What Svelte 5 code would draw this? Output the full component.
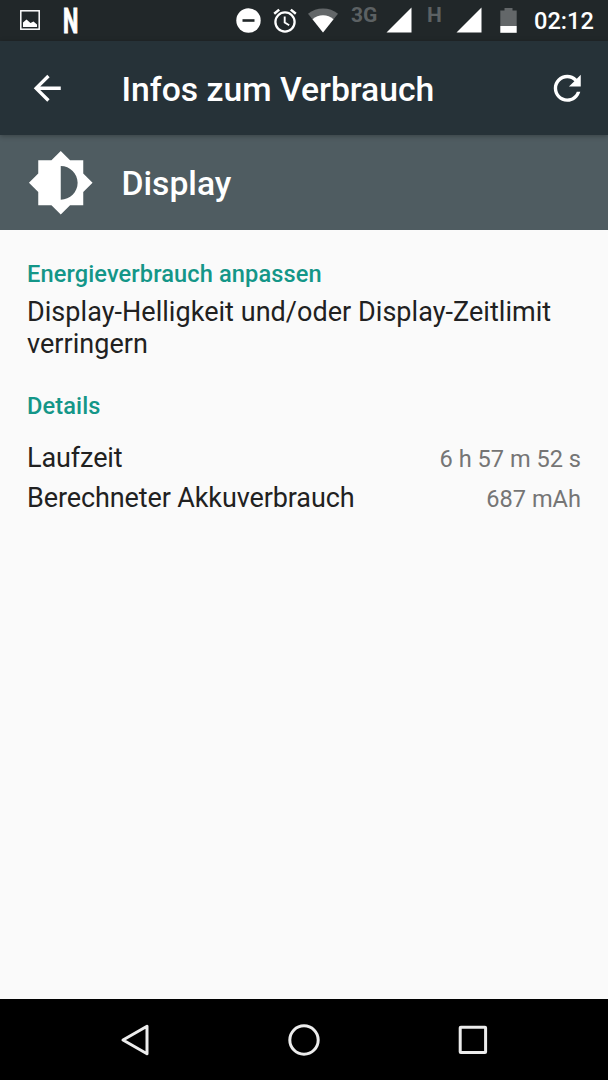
<!-- script -->
<script lang="ts">
  /* types */
  type Detail = { label: string, value: string }

  /* constants */
  const title = 'Infos zum Verbrauch'
  const details: Detail[] = [
    { label: 'Laufzeit', value: '6 h 57 m 52 s' },
    { label: 'Berechneter Akkuverbrauch', value: '687 mAh' }
  ]
</script>

<!-- template -->
<div class="screen">
  <div class="status-bar">
    <svg class="picture" width="20" height="20" viewBox="0 0 20 20">
      <rect x="0.8" y="0.8" width="18.4" height="18.4" fill="none" stroke="#fff" stroke-width="1.5" />
      <path d="M3 17v-4.500l3.500-3 4 3.500 3-1.500 3.500 3v2.500z" fill="#fff" />
    </svg>
    <span class="netflix">N</span>

    <div class="status-icons">
      <svg class="dnd" width="25" height="25" viewBox="0 0 25 25">
        <circle cx="12.500" cy="12.500" r="12.200" fill="#fff" />
        <rect x="6.500" y="11.200" width="12" height="2.600" fill="#212729" />
      </svg>
      <svg class="alarm" width="24" height="25" viewBox="0 0 24 25" fill="none" stroke="#fff">
        <circle cx="12" cy="14" r="9.600" stroke-width="2.300" />
        <path d="M11.700 8.500v6l4.500 2.700" stroke-width="1.900" />
        <path d="M1.200 5.800l5-4.200M22.800 5.800l-5-4.200" stroke-width="2.500" />
      </svg>
      <svg class="wifi" width="30" height="25" viewBox="0 0 30 25">
        <path d="M15 24.500L0 5.700Q6.500 0.500 15 0.500T30 5.700z" fill="#636769" />
        <path d="M15 24.500L4.500 11.200Q9 7.200 15 7.200T25.500 11.200z" fill="#fff" />
      </svg>
      <span class="network three-g">3G</span>
      <svg class="signal" width="26" height="26" viewBox="0 0 26 26">
        <path d="M25.500 0.500v25H0.500z" fill="#fff" />
      </svg>
      <span class="network h">H</span>
      <svg class="signal" width="26" height="26" viewBox="0 0 26 26">
        <path d="M25.500 0.500v25H0.500z" fill="#fff" />
      </svg>
      <svg class="battery" width="17" height="25" viewBox="0 0 17 25">
        <path d="M0.300 2.500h4.200V0h8v2.500h4.200V18H0.300z" fill="#636769" />
        <path d="M0.300 18h16.400v6.800H0.300z" fill="#fff" />
      </svg>
    </div>
    <span class="clock">02:12</span>
  </div>

  <header class="toolbar">
    <svg class="action" viewBox="0 0 24 24">
      <path d="M20 11H7.830l5.590-5.590L12 4l-8 8 8 8 1.410-1.410L7.830 13H20v-2z" />
    </svg>
    <h1>{title}</h1>
    <svg class="action" viewBox="0 0 24 24">
      <path d="M17.650 6.350C16.200 4.900 14.210 4 12 4c-4.420 0-7.990 3.580-7.990 8s3.570 8 7.990 8c3.730 0 6.840-2.550 7.730-6h-2.080c-.82 2.330-3.040 4-5.650 4-3.310 0-6-2.690-6-6s2.690-6 6-6c1.660 0 3.140.69 4.220 1.780L13 11h7V4l-2.350 2.350z" />
    </svg>
  </header>

  <div class="entry">
    <svg class="brightness" viewBox="0 0 24 24">
      <path d="M20 15.310L23.310 12 20 8.690V4h-4.690L12 .69 8.690 4H4v4.690L.69 12 4 15.310V20h4.690L12 23.310 15.310 20H20v-4.690zM12 18V6c3.310 0 6 2.690 6 6s-2.690 6-6 6z" />
    </svg>
    <h2>Display</h2>
  </div>

  <main>
    <h3>Energieverbrauch anpassen</h3>
    <p>Display-Helligkeit und/oder Display-Zeitlimit verringern</p>
    <h3 class="details-title">Details</h3>
    {#each details as detail}
      <div class="detail">
        <span class="label">{detail.label}</span>
        <span class="value">{detail.value}</span>
      </div>
    {/each}
  </main>

  <nav>
    <svg width="34" height="34" viewBox="0 0 34 34">
      <path d="M29 3.200v27.600L5 17z" />
    </svg>
    <svg width="34" height="34" viewBox="0 0 34 34">
      <circle cx="17" cy="17" r="14.200" />
    </svg>
    <svg width="34" height="34" viewBox="0 0 34 34">
      <rect x="4.200" y="4.200" width="25.400" height="25.400" rx="0.600" />
    </svg>
  </nav>
</div>

<!-- styles -->
<style>
  :global(body) {
    margin: 0;
    background-color: #fafafa;
  }

  /* containers */
  .screen {
    display: flex;
    flex-direction: column;
    width: 608px;
    height: 1080px;
    overflow: hidden;
    background-color: #fafafa;
    color: #212121;
    font-family: Roboto, sans-serif;
  }
  svg {
    display: block;
    flex: none;
  }
  h1, h2, h3, p {
    margin: 0;
    font-weight: 500;
  }

  /* status bar */
  .status-bar {
    display: flex;
    align-items: center;
    flex: none;
    height: 41px;
    padding: 0 14px 0 20px;
    box-sizing: border-box;
    background-color: #212729;
    color: #fff;
  }
  .picture {
    margin-bottom: 1px;
  }
  .netflix {
    width: 14px;
    margin-left: 23px;
    padding-top: 2px;
    font-size: 35px;
    line-height: 39px;
    font-weight: 700;
    -webkit-text-stroke: 1px #fff;
    transform: scaleX(0.62);
    transform-origin: left;
  }
  .status-icons {
    display: flex;
    align-items: center;
    height: 40px;
    margin-bottom: 1px;
    margin-left: auto;
  }
  .alarm {
    margin-left: 12px;
  }
  .wifi {
    margin-left: 11px;
  }
  .network {
    align-self: flex-start;
    margin-top: -3px;
    color: #5c6163;
    font-size: 21px;
    line-height: 20px;
    font-weight: 700;
  }
  .three-g {
    width: 26px;
    margin-left: 13px;
  }
  .h {
    width: 15px;
    margin-left: 15px;
  }
  .signal {
    margin-left: 9px;
  }
  .h + .signal {
    margin-left: 14px;
  }
  .battery {
    margin-left: 18px;
  }
  .clock {
    width: 60px;
    margin-left: 17px;
    padding-top: 2px;
    font-size: 23.600px;
    line-height: 39px;
    font-weight: 500;
  }
  .network {
    margin-top: 5px;
  }

  /* toolbar */
  .toolbar {
    position: relative;
    display: flex;
    align-items: center;
    flex: none;
    height: 94px;
    padding: 0 21px 0 27px;
    background-color: #263238;
    box-shadow: 0 1px 5px rgba(0, 0, 0, 0.3);
    color: #fff;
  }
  .action {
    width: 40.500px;
    height: 40.500px;
    fill: #fff;
  }
  h1, h2 {
    padding-top: 3px;
    font-size: 33.700px;
    line-height: 40px;
  }
  h1 {
    flex: 1;
    margin-left: 54px;
  }

  /* entry */
  .entry {
    display: flex;
    align-items: center;
    flex: none;
    height: 94.500px;
    padding-left: 27px;
    background-color: #4f5c61;
    color: #fff;
  }
  .brightness {
    width: 67.500px;
    height: 67.500px;
    fill: #fff;
  }
  h2 {
    margin-left: 27px;
  }

  /* content */
  main {
    flex: 1;
    padding: 30.500px 27px 0;
  }
  h3 {
    color: #149688;
    font-size: 23.600px;
    line-height: 28px;
    letter-spacing: 0.120px;
  }
  p {
    margin-top: 8px;
    font-size: 27px;
    line-height: 32px;
    font-weight: 400;
    letter-spacing: 0.040px;
  }
  .details-title {
    margin: 32px 0 18px;
  }
  .detail {
    display: flex;
    align-items: baseline;
    justify-content: space-between;
    height: 40px;
    font-size: 27px;
    line-height: 40px;
  }
  .label {
    letter-spacing: -0.110px;
  }
  .value {
    color: #757575;
    font-size: 23.600px;
  }

  /* navigation */
  nav {
    display: flex;
    align-items: center;
    justify-content: center;
    gap: 135px;
    flex: none;
    height: 81px;
    background-color: #000;
  }
  nav svg {
    fill: none;
    stroke: #ececec;
    stroke-width: 3;
    stroke-linejoin: round;
  }
</style>
